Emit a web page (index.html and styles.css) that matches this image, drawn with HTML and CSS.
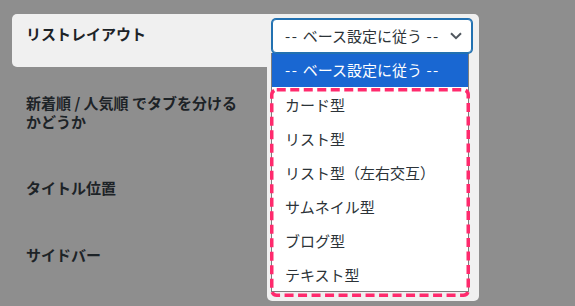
FILE: index.html
```html
<!DOCTYPE html>
<html lang="ja">
<head>
<meta charset="utf-8">
<link rel="stylesheet" href="styles.css">
</head>
<body>
<div class="form">
  <div class="row row-active">
    <div class="label">リストレイアウト</div>
    <div class="field">
      <div class="select">
        <span class="select-text"><span class="dash">--</span> ベース設定に従う <span class="dash">--</span></span>
        <svg class="chevron" width="12" height="8" viewBox="0 0 12 8"><path d="M1 1.2 L6 6.2 L11 1.2" fill="none" stroke="#50575e" stroke-width="2"/></svg>
      </div>
      <div class="spot"></div>
      <ul class="options">
        <li class="option selected"><span class="dashed-text"><span class="dash">--</span> ベース設定に従う <span class="dash">--</span></span></li>
        <li class="option">カード型</li>
        <li class="option">リスト型</li>
        <li class="option">リスト型（左右交互）</li>
        <li class="option">サムネイル型</li>
        <li class="option">ブログ型</li>
        <li class="option">テキスト型</li>
      </ul>
      <svg class="mark" width="200" height="209" viewBox="0 0 200 209"><rect x="1.75" y="1.75" width="196.5" height="205.5" rx="5" fill="none" stroke="#ff2a6d" stroke-width="3.5" stroke-dasharray="9 4.5"/></svg>
    </div>
  </div>
  <div class="row row-first">
    <div class="label">新着順 / 人気順 でタブを分ける<br>かどうか</div>
  </div>
  <div class="row">
    <div class="label">タイトル位置</div>
  </div>
  <div class="row">
    <div class="label">サイドバー</div>
  </div>
</div>
</body>
</html>
```
FILE: styles.css
```css
html, body {
  margin: 0;
  padding: 0;
}
body {
  width: 575px;
  height: 306px;
  overflow: hidden;
  background: #8e8e8e;
  font-family: "Noto Sans CJK JP", "Noto Sans", sans-serif;
  color: #1d2327;
}
.form {
  padding: 14px 96px 0 12px;
}
.row {
  padding: 24px 0 24px 14px;
}
.row-first {
  padding-top: 26px;
  padding-bottom: 23px;
}
.row .label {
  width: 246px;
  font-size: 15px;
  font-weight: 700;
  line-height: 19px;
}
.row-active {
  display: flex;
  align-items: flex-start;
  background: #f0f0f0;
  border-radius: 5px 5px 0 5px;
  padding: 5px 7px 14px 14px;
}
.row-active .label {
  margin-top: 5px;
  line-height: 20px;
}
.field {
  position: relative;
  width: 200px;
}
.select {
  box-sizing: border-box;
  height: 34px;
  display: flex;
  align-items: center;
  justify-content: space-between;
  padding: 0 9px 0 12px;
  background: #fff;
  border: 1px solid #2271b1;
  box-shadow: 0 0 0 1px #2271b1;
  border-radius: 4px;
  font-size: 15px;
  color: #2c3338;
  position: relative;
  z-index: 3;
}
.select-text,
.dashed-text {
  line-height: 20px;
  word-spacing: 1px;
}
.dash {
  letter-spacing: 1.5px;
}
.chevron {
  display: block;
}
.spot {
  position: absolute;
  left: -5px;
  top: 48px;
  width: 212px;
  height: 234px;
  background: #f0f0f0;
  border-radius: 0 0 5px 5px;
  z-index: 1;
}
.options {
  position: absolute;
  left: -1px;
  top: 34px;
  width: 198px;
  margin: 0;
  padding: 0;
  list-style: none;
  background: #fff;
  border: 1px solid #7e7e7e;
  border-top: 0;
  box-sizing: border-box;
  z-index: 2;
}
.option {
  height: 34px;
  padding-left: 13px;
  display: flex;
  align-items: center;
  font-size: 15px;
  color: #2c3338;
}
.option.selected {
  background: #1967d2;
  color: #fff;
}
.mark {
  position: absolute;
  left: -2px;
  top: 69px;
  z-index: 4;
  display: block;
}
```
